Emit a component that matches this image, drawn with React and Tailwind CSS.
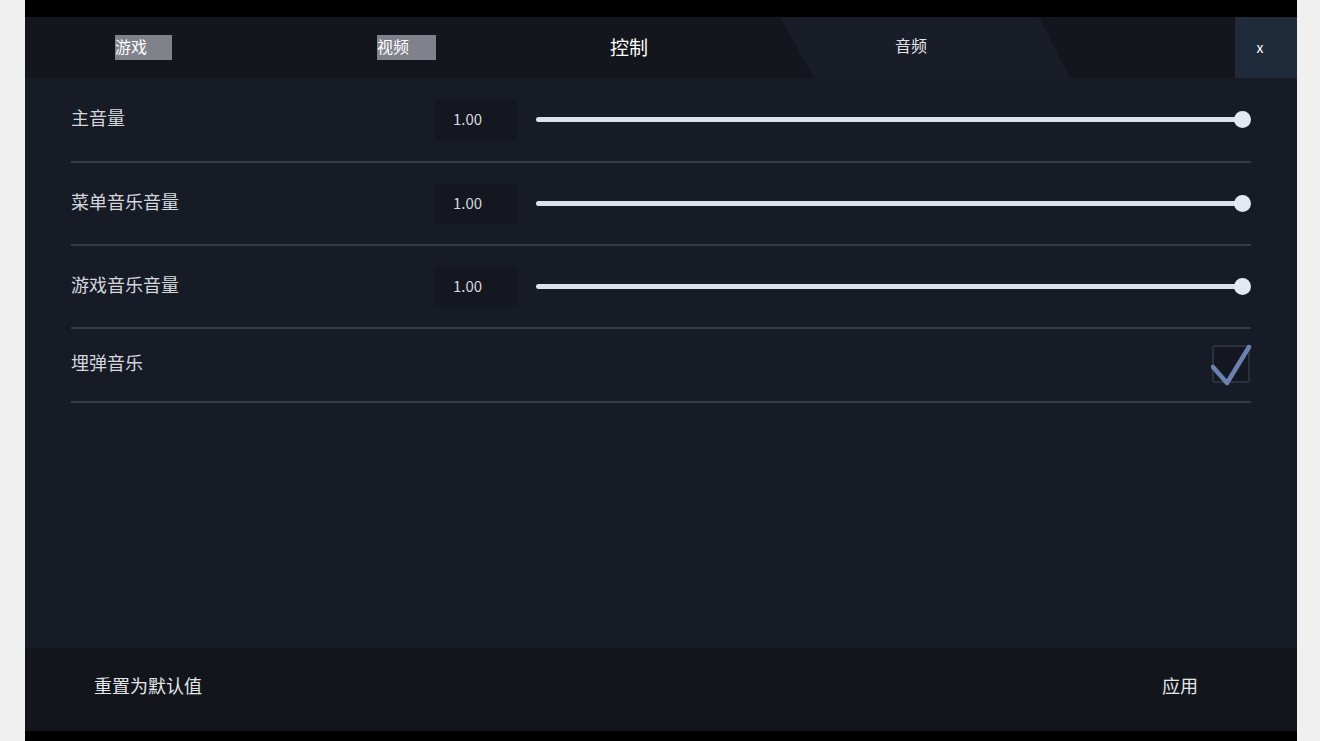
import React from 'react';

const FONT = { fontFamily: '"Noto Sans CJK SC", "Noto Sans", sans-serif' };

const volumes = [
  { label: '主音量', value: '1.00', height: 'h-[85px]' },
  { label: '菜单音乐音量', value: '1.00', height: 'h-[83px]' },
  { label: '游戏音乐音量', value: '1.00', height: 'h-[83px]' },
];

const SliderRow = ({ label, value, height }) => (
  <div className={`${height} flex items-center border-b-2 border-[#353a46]`}>
    <div className="w-[364px] -mt-[5px] text-[18px] text-[#d4d7de]">{label}</div>
    <div className="w-[82px] h-[40px] bg-[#141720] flex items-center pl-[18px] text-[15px] text-[#d4d7de]">
      {value}
    </div>
    <div className="flex-1 ml-[19px] flex items-center">
      <div className="flex-1 h-[5px] rounded-full bg-[#dde1ee]" />
      <div className="w-[17px] h-[17px] -ml-[9px] rounded-full bg-[#e4e8f3]" />
    </div>
  </div>
);

const App = () => {
  return (
    <div className="min-h-screen bg-[#f0f0f0] pl-[25px]" style={FONT}>
      <div className="w-[1272px] h-[741px] flex flex-col bg-[#171b25]">
        <div className="h-[17px] bg-black" />

        {/* tab bar */}
        <div className="relative h-[61px] bg-[#13161c] flex items-center">
          <div className="absolute inset-y-0 left-[755px] w-[290px] bg-[#191d27] [clip-path:polygon(0_0,259px_0,290px_100%,34px_100%)]" />
          <div className="relative flex items-center flex-1 pl-[90px]">
            <div className="w-[57px] h-[25px] bg-[#7f818b] text-[16px] leading-[22px] text-white">游戏</div>
            <div className="ml-[205px] w-[59px] h-[25px] bg-[#7f818b] text-[16px] leading-[22px] text-white">视频</div>
            <div className="ml-[174px] -mt-[1px] text-[19px] text-white">控制</div>
            <div className="ml-[247px] text-[16px] text-[#e2e4e8] -mt-[5px]">音频</div>
          </div>
          <div className="relative w-[62px] h-full bg-[#1f2a3b] flex items-center justify-center pr-[12px] text-[14px] text-white">
            x
          </div>
        </div>

        {/* settings */}
        <div className="flex-1 px-[46px]">
          {volumes.map((v) => (
            <SliderRow key={v.label} {...v} />
          ))}
          <div className="h-[74px] flex items-center justify-between border-b-2 border-[#353a46]">
            <div className="-mt-[6px] text-[18px] text-[#d4d7de]">埋弹音乐</div>
            <div className="relative w-[38px] h-[38px] mr-[1px] -mt-[3px] border-2 border-[#2b303c] rounded-[3px] bg-[#151821]">
              <svg className="absolute -left-[3px] -top-[3px]" width="44" height="44" viewBox="0 0 44 44">
                <path d="M2 23 L16 39 L38 3" fill="none" stroke="#6b81b3" strokeWidth="4.5" strokeLinecap="round" strokeLinejoin="round" />
              </svg>
            </div>
          </div>
        </div>

        {/* footer */}
        <div className="h-[83px] bg-[#12151b] flex items-center justify-between pl-[69px] pr-[99px]">
          <button className="-mt-[9px] text-[18px] text-[#e4e6ea]">重置为默认值</button>
          <button className="-mt-[9px] text-[18px] text-[#e4e6ea]">应用</button>
        </div>
        <div className="h-[10px] bg-black" />
      </div>
    </div>
  );
};

export default App;
